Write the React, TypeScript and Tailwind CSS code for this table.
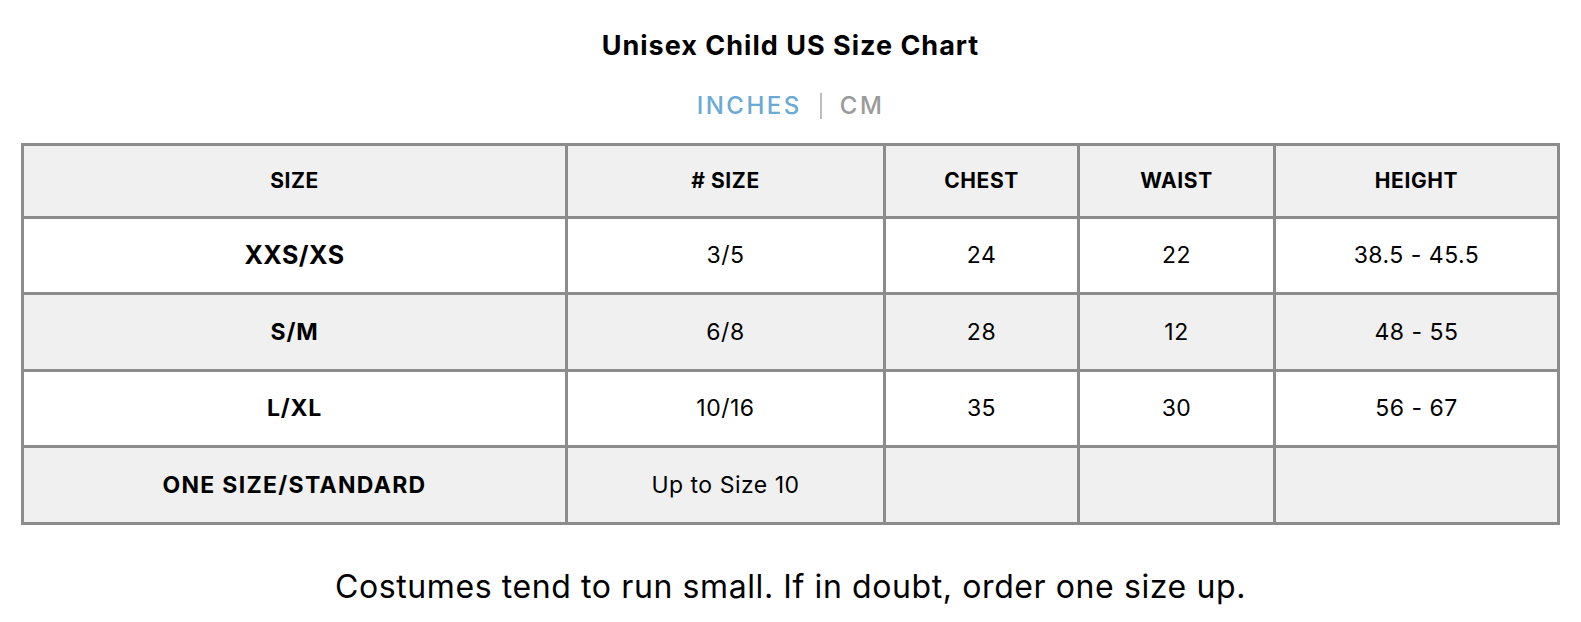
const rows = [
  { size: "XXS/XS", num: "3/5", chest: "24", waist: "22", height: "38.5 - 45.5", big: true },
  { size: "S/M", num: "6/8", chest: "28", waist: "12", height: "48 - 55" },
  { size: "L/XL", num: "10/16", chest: "35", waist: "30", height: "56 - 67" },
  { size: "ONE SIZE/STANDARD", num: "Up to Size 10", chest: "", waist: "", height: "", small: true },
];

const heads = ["SIZE", "# SIZE", "CHEST", "WAIST", "HEIGHT"];

export default function App() {
  return (
    <div className="min-h-[622px] bg-white font-['Inter',sans-serif] text-black">
      <div className="flex flex-col items-center pt-[27px]">
        <h1 className="text-[27px] font-bold leading-[38px] tracking-[1px]">Unisex Child US Size Chart</h1>
        <div className="mt-[24px] flex items-center text-[24px] font-medium leading-[34px] tracking-[2.5px]">
          <span className="text-[#6aaad6]">INCHES</span>
          <span className="mx-[18px] h-[26px] w-[2px] bg-[#bdbdbd]" />
          <span className="text-[#9a9a9a]">CM</span>
        </div>
      </div>

      <table className="mx-auto mt-[20px] w-[1539px] table-fixed border-collapse border-[3px] border-[#8c8c8c] text-center">
        <colgroup>
          <col className="w-[544px]" />
          <col className="w-[318px]" />
          <col className="w-[194px]" />
          <col className="w-[196px]" />
          <col className="w-[284px]" />
        </colgroup>
        <thead>
          <tr className="h-[73px] bg-[#f0f0f0]">
            {heads.map((h) => (
              <th key={h} className="border-[3px] border-[#8c8c8c] text-[21px] font-bold tracking-[0.6px]">
                {h}
              </th>
            ))}
          </tr>
        </thead>
        <tbody>
          {rows.map((r, i) => (
            <tr key={r.size} className={i % 2 === 1 ? "h-[77px] bg-[#f0f0f0]" : "h-[76px] bg-white"}>
              <td
                className={
                  "border-[3px] border-[#8c8c8c] font-bold " +
                  (r.big ? "text-[25px] tracking-[0.5px]" : r.small ? "text-[23px] tracking-[1.3px]" : "text-[23px] tracking-[0.8px]")
                }
              >
                {r.size}
              </td>
              <td className="border-[3px] border-[#8c8c8c] text-[23px] tracking-[0.5px]">{r.num}</td>
              <td className="border-[3px] border-[#8c8c8c] text-[23px] tracking-[0.5px]">{r.chest}</td>
              <td className="border-[3px] border-[#8c8c8c] text-[23px] tracking-[0.5px]">{r.waist}</td>
              <td className="border-[3px] border-[#8c8c8c] text-[23px] tracking-[0.5px]">{r.height}</td>
            </tr>
          ))}
        </tbody>
      </table>

      <p className="mt-[41px] text-center text-[32px] leading-[42px] tracking-[0.6px]">
        Costumes tend to run small. If in doubt, order one size up.
      </p>
    </div>
  );
}
